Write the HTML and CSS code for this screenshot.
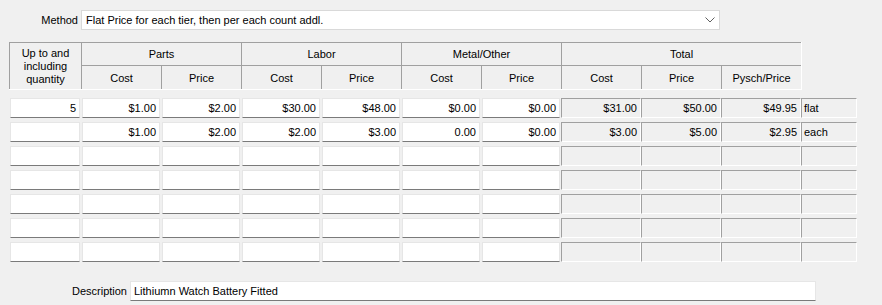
FILE: index.html
```html
<!DOCTYPE html>
<html lang="en">
<head>
  <meta charset="UTF-8" />
  <title>Pricing Tiers</title>
  <link rel="stylesheet" href="styles.css">
</head>
<body>

  <!-- Method picker -->
  <div class="method">
    <label>Method</label>
    <div class="combo">
      <span>Flat Price for each tier, then per each count addl.</span>
      <svg width="10" height="6" viewBox="0 0 10 6"><path d="M0.5 0.5 L5 5 L9.5 0.5" fill="none" stroke="#606060" stroke-width="1"/></svg>
    </div>
  </div>

  <!-- Column headers -->
  <div class="head">
    <div class="hc qty">Up to and<br>including<br>quantity</div>
    <div class="hc group">Parts</div>
    <div class="hc group">Labor</div>
    <div class="hc group">Metal/Other</div>
    <div class="hc group total">Total</div>
    <div class="hc">Cost</div><div class="hc">Price</div>
    <div class="hc">Cost</div><div class="hc">Price</div>
    <div class="hc">Cost</div><div class="hc">Price</div>
    <div class="hc">Cost</div><div class="hc">Price</div><div class="hc">Pysch/Price</div>
  </div>

  <!-- Tier rows -->
  <div class="rows">
    <div class="row">
      <div class="cell">5</div>
      <div class="cell">$1.00</div><div class="cell">$2.00</div>
      <div class="cell">$30.00</div><div class="cell">$48.00</div>
      <div class="cell">$0.00</div><div class="cell">$0.00</div>
      <div class="calc">$31.00</div><div class="calc">$50.00</div><div class="calc">$49.95</div>
      <div class="calc unit">flat</div>
    </div>
    <div class="row">
      <div class="cell"></div>
      <div class="cell">$1.00</div><div class="cell">$2.00</div>
      <div class="cell">$2.00</div><div class="cell">$3.00</div>
      <div class="cell">0.00</div><div class="cell">$0.00</div>
      <div class="calc">$3.00</div><div class="calc">$5.00</div><div class="calc">$2.95</div>
      <div class="calc unit">each</div>
    </div>
    <div class="row">
      <div class="cell"></div><div class="cell"></div><div class="cell"></div><div class="cell"></div><div class="cell"></div><div class="cell"></div><div class="cell"></div>
      <div class="calc"></div><div class="calc"></div><div class="calc"></div><div class="calc unit"></div>
    </div>
    <div class="row">
      <div class="cell"></div><div class="cell"></div><div class="cell"></div><div class="cell"></div><div class="cell"></div><div class="cell"></div><div class="cell"></div>
      <div class="calc"></div><div class="calc"></div><div class="calc"></div><div class="calc unit"></div>
    </div>
    <div class="row">
      <div class="cell"></div><div class="cell"></div><div class="cell"></div><div class="cell"></div><div class="cell"></div><div class="cell"></div><div class="cell"></div>
      <div class="calc"></div><div class="calc"></div><div class="calc"></div><div class="calc unit"></div>
    </div>
    <div class="row">
      <div class="cell"></div><div class="cell"></div><div class="cell"></div><div class="cell"></div><div class="cell"></div><div class="cell"></div><div class="cell"></div>
      <div class="calc"></div><div class="calc"></div><div class="calc"></div><div class="calc unit"></div>
    </div>
    <div class="row">
      <div class="cell"></div><div class="cell"></div><div class="cell"></div><div class="cell"></div><div class="cell"></div><div class="cell"></div><div class="cell"></div>
      <div class="calc"></div><div class="calc"></div><div class="calc"></div><div class="calc unit"></div>
    </div>
  </div>

  <!-- Description -->
  <div class="desc">
    <label>Description</label>
    <div class="textbox">Lithiumn Watch Battery Fitted</div>
  </div>

</body>
</html>
```

FILE: styles.css
```css
body {
  margin: 0; background: #f0f0f0; color: #000;
  font-family: "Liberation Sans", Arial, sans-serif; font-size: 11px;
}

.method { display: flex; align-items: center; padding: 10px 0 0 0; }
.method label { width: 78px; text-align: right; margin-right: 3px; }
.combo {
  width: 639px; height: 20px; box-sizing: border-box;
  display: flex; align-items: center; justify-content: space-between;
  padding: 0 4px 0 4px; background: #fff; border: 1px solid #d9d9d9;
}

.head {
  display: grid; margin: 12px 0 0 9px; width: 792px;
  grid-template-columns: 72px repeat(9, 80px);
  grid-template-rows: 23px 24px;
  border-right: 1px solid #fff; border-bottom: 1px solid #fff;
}
.hc {
  display: flex; align-items: center; justify-content: center; text-align: center;
  border-top: 1px solid #a0a0a0; border-left: 1px solid #a0a0a0;
}
.hc.qty { grid-row: span 2; line-height: 13px; }
.hc.group { grid-column: span 2; }
.hc.total { grid-column: span 3; }

.rows { display: flex; flex-direction: column; gap: 4px; margin: 8px 0 0 9px; }
.row {
  display: grid; height: 20px;
  grid-template-columns: 72px repeat(9, 80px) 56px;
}
.cell, .calc, .textbox {
  box-sizing: border-box; text-align: right; line-height: 18px;
  padding: 0 3px; white-space: nowrap;
}
.cell {
  margin: 0 1px; background: #fff;
  border: 1px solid #e6e6e6; border-bottom-color: #7a7a7a;
}
.calc {
  border-top: 1px solid #a0a0a0; border-left: 1px solid #a0a0a0;
  border-right: 1px solid #fff; border-bottom: 1px solid #fff;
}
.calc.unit { text-align: left; padding-left: 2px; }

.desc { display: flex; align-items: center; margin-top: 19px; }
.desc label { width: 127px; text-align: right; margin-right: 3px; }
.textbox {
  width: 686px; height: 20px; text-align: left; background: #fff;
  border: 1px solid #e6e6e6; border-bottom-color: #7a7a7a;
}
```
